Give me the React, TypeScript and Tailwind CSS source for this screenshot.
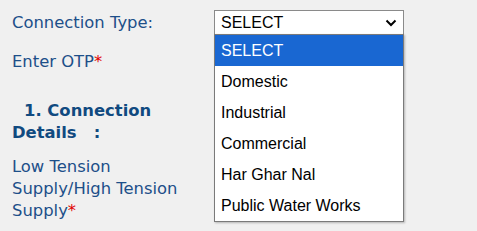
import React from "react";

const options = ["SELECT", "Domestic", "Industrial", "Commercial", "Har Ghar Nal", "Public Water Works"];

export default function App() {
  return (
    <div className="relative w-[477px] h-[231px] bg-[#f0f0f0] overflow-hidden">
      <div className="pl-[12px] pt-[10px] text-[16.4px] text-[#1d4f89] leading-[22px]" style={{ fontFamily: "'DejaVu Sans', Verdana, sans-serif" }}>
        <div className="flex items-center h-[25px]">
          <div className="w-[202px]">Connection Type:</div>
          <div className="relative w-[190px] h-[25px] bg-white border border-[#8a8a8a] flex items-center pl-[6px]" style={{ fontFamily: "'Liberation Sans', Arial, sans-serif" }}>
            <span className="text-[16px] text-black">SELECT</span>
            <svg className="absolute right-[6px] top-[8px]" width="12" height="8" viewBox="0 0 12 8">
              <path d="M1.5 1.5 L6 6 L10.5 1.5" fill="none" stroke="#000" strokeWidth="2" />
            </svg>
          </div>
        </div>
        <div className="mt-[16px] h-[22px]">
          Enter OTP<span className="text-[#e00000]">*</span>
        </div>
        <div className="mt-[27px] w-[188px] font-bold text-[#104a80]">
          <span className="pl-[12px]">1. Connection Details&nbsp;&nbsp;&nbsp;:</span>
        </div>
        <div className="mt-[12px] w-[188px]">
          Low Tension Supply/High Tension Supply<span className="text-[#e00000]">*</span>
        </div>
      </div>
      <div className="absolute left-[214px] top-[34px] w-[190px] bg-white border border-[#7a7a7a] shadow-[1px_1px_2px_rgba(0,0,0,0.25)]" style={{ fontFamily: "'Liberation Sans', Arial, sans-serif" }}>
        {options.map((o, i) => (
          <div key={o} className={`h-[31px] flex items-center pl-[6px] text-[16px] ${i === 0 ? "bg-[#1967d2] text-white" : "text-black"}`}>
            {o}
          </div>
        ))}
      </div>
    </div>
  );
}
